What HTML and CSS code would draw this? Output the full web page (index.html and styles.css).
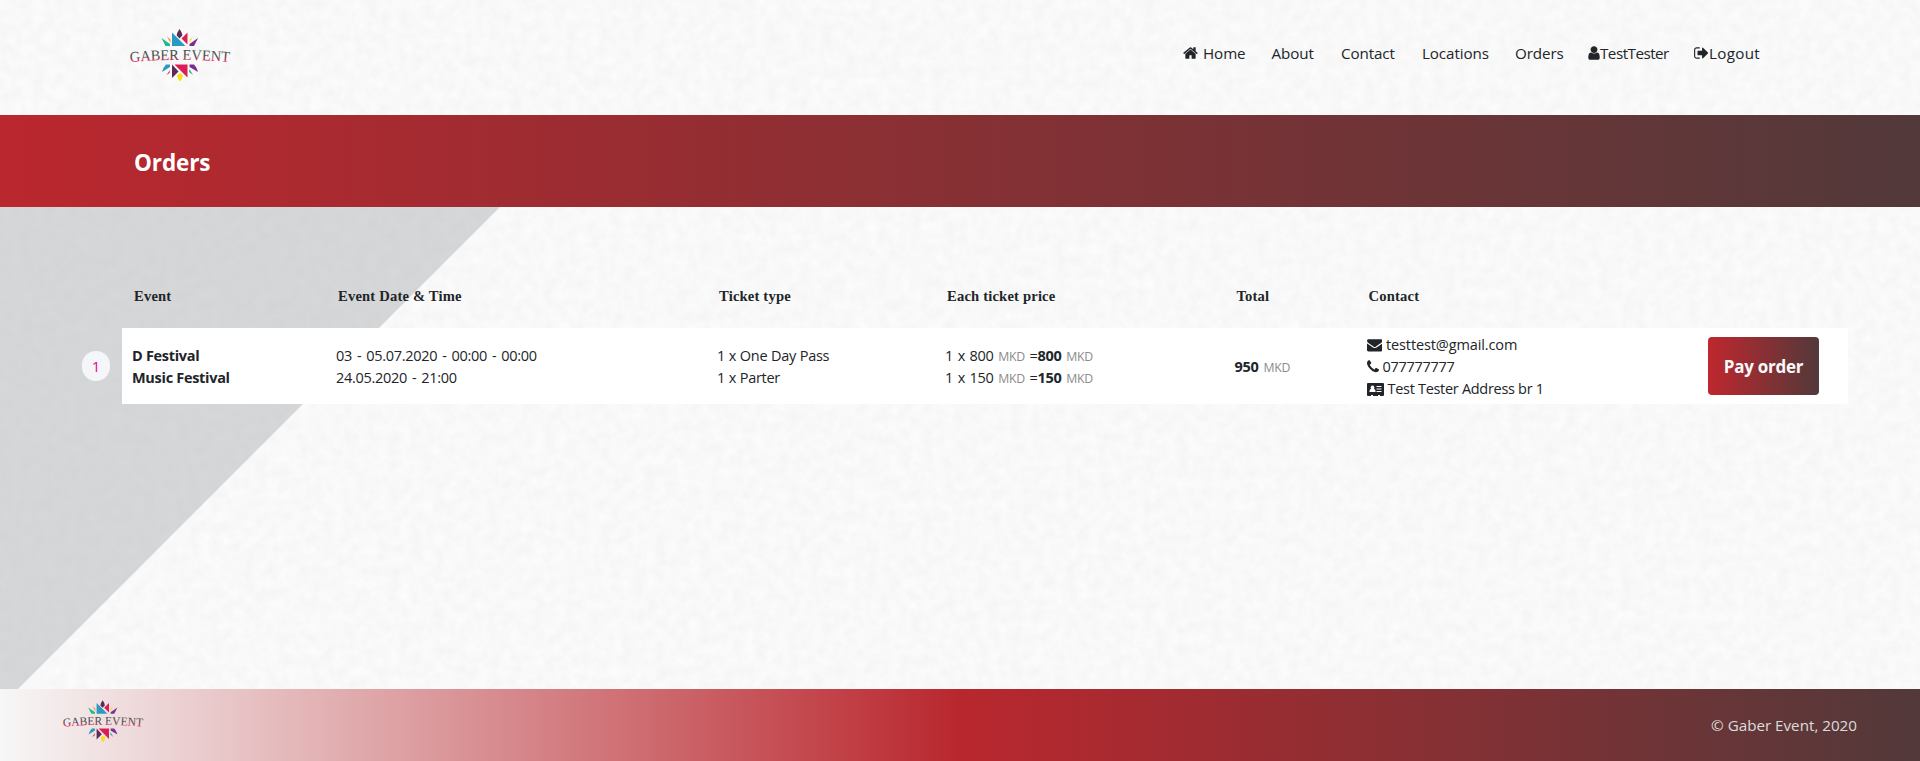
FILE: index.html
```html
<!DOCTYPE html>
<html lang="en">
<head>
<meta charset="utf-8">
<title>Orders - Gaber Event</title>
<link rel="stylesheet" href="styles.css">
</head>
<body>
<svg class="defs" width="0" height="0">
  <defs>
    <linearGradient id="ink" x1="0" y1="34" x2="0" y2="48" gradientUnits="userSpaceOnUse">
      <stop offset=".5" stop-color="#4a4a4c"/><stop offset=".82" stop-color="#d42a55"/>
    </linearGradient>
    <path id="arc" d="M20.300 47.300 Q70 42.300 121.500 47.300"/>
    <symbol id="logo" viewBox="0 0 140 80">
      <path fill="#5b2a56" d="M69.500 14q3 4 2.800 6.500l-2.800 3-2.800-3q0-2.500 2.800-6.500zM62 49.500l6.500 7-6.500 6.500z"/>
      <path fill="#2a9ac0" d="M62 17.500L75.500 31H62zM60 49.500v2.500l-8 5q1.500-5 4-7.500z"/>
      <path fill="#dc1e57" d="M77.500 17.500v12l-6-6zM64.500 49.500h13V62.500z"/>
      <path fill="#1dbb8c" d="M51.500 23l8.500 6v2h-4.500zM79.500 54l3.500 6-4-3z"/>
      <path fill="#f39233" d="M57 21.500l3.500 3v3.500z"/>
      <path fill="#7b2d90" d="M88 23l-8.500 6v2H84zM79.500 49.500v2.500l8.500 5q-1.500-5-4-7.500z"/>
      <path fill="#f5e21d" d="M83 21.500l-3.500 3v3.500zM70 58l3 2.500q-.5 4-3 6-2.500-2-3-6z"/>
      <path fill="#d82445" d="M60 55l-.5 3-3 2z"/>
      <text class="logo-text" fill="url(#ink)"><textPath href="#arc" textLength="99.500" lengthAdjust="spacingAndGlyphs">GABER EVENT</textPath></text>
    </symbol>
    <filter id="paper" x="0" y="0" width="100%" height="100%" color-interpolation-filters="sRGB">
      <feTurbulence type="fractalNoise" baseFrequency=".09" numOctaves="3" seed="4"/>
      <feColorMatrix values=".04 0 0 0 .954  .04 0 0 0 .954  .04 0 0 0 .954  0 0 0 0 1"/>
    </filter>
  </defs>
</svg>
<svg class="paper"><rect width="100%" height="100%" filter="url(#paper)"/></svg>

<header class="header">
  <svg class="brand"><use href="#logo"/></svg>
  <nav class="nav">
    <a><svg class="fa-home" viewBox="64 0 1664 1792"><path d="M1472 992v480q0 26-19 45t-45 19h-384v-384h-256v384h-384q-26 0-45-19t-19-45v-480q0-1 .5-3t.5-3l575-474 575 474q1 2 1 6zm223-69l-62 74q-8 9-21 11h-3q-13 0-21-7l-692-577-692 577q-12 8-24 7-13-2-21-11l-62-74q-8-10-7-23.500t11-21.500l719-599q32-26 76-26t76 26l244 204v-195q0-14 9-23t23-9h192q14 0 23 9t9 23v408l219 182q10 8 11 21.500t-7 23.500z"/></svg><span class="home">Home</span></a>
    <a>About</a><a>Contact</a><a>Locations</a><a>Orders</a>
    <a class="user"><svg class="fa-user" viewBox="256 0 1280 1792"><path d="M1536 1399q0 109-62.500 187t-150.500 78h-854q-88 0-150.500-78t-62.500-187q0-85 8.500-160.500t31.500-152 58.500-131 94-89 134.500-34.500q131 128 313 128t313-128q76 0 134.500 34.500t94 89 58.500 131 31.500 152 8.500 160.500zm-256-887q0 159-112.500 271.500t-271.500 112.500-271.500-112.500-112.500-271.500 112.500-271.500 271.500-112.500 271.500 112.500 112.500 271.500z"/></svg>TestTester</a>
    <a class="logout"><svg class="fa-out" viewBox="64 0 1664 1792"><path d="M704 1440q0 4 1 20t.5 26.500-3 23.500-10 19.500-20.500 6.500h-320q-119 0-203.500-84.500t-84.500-203.500v-704q0-119 84.500-203.500t203.500-84.500h320q13 0 22.500 9.500t9.500 22.500q0 4 1 20t.5 26.500-3 23.500-10 19.500-20.500 6.500h-320q-66 0-113 47t-47 113v704q0 66 47 113t113 47h312l11.500 1 11.500 3 8 5.500 7 9 2 13.500zm928-544q0 26-19 45l-544 544q-19 19-45 19t-45-19-19-45v-288h-448q-26 0-45-19t-19-45v-384q0-26 19-45t45-19h448v-288q0-26 19-45t45-19 45 19l544 544q19 19 19 45z"/></svg>Logout</a>
  </nav>
</header>

<div class="title-bar"><h1>Orders</h1></div>

<main class="main">
  <div class="row head">
    <span>Event</span><span>Event Date &amp; Time</span><span>Ticket type</span><span>Each ticket price</span><span>Total</span><span>Contact</span>
  </div>
  <div class="order">
    <div class="number">1</div>
    <div class="row body">
      <div class="bold">D Festival<br>Music Festival</div>
      <div class="dates">03 - 05.07.2020 - 00:00 - 00:00<br>24.05.2020 - 21:00</div>
      <div class="tickets">1 x One Day Pass<br>1 x Parter</div>
      <div class="prices">1 x 800 <small>MKD</small> =<b>800</b> <small>MKD</small><br>1 x 150 <small>MKD</small> =<b>150</b> <small>MKD</small></div>
      <div class="total"><b>950</b> <small>MKD</small></div>
      <div class="contact">
        <p><svg class="fa-mail" viewBox="0 0 1792 1792"><path d="M1792 710v794q0 66-47 113t-113 47h-1472q-66 0-113-47t-47-113v-794q44 49 101 87 362 246 497 345 57 42 92.500 65.500t94.500 48 110 24.500h2q51 0 110-24.500t94.500-48 92.500-65.500q170-123 498-345 57-39 100-87zm0-294q0 79-49 151t-122 123q-376 261-468 325-10 7-42.500 31t-54 38.500-52 32.500-57.500 27-50 9h-2q-23 0-50-9t-57.500-27-52-32.500-54-38.500-42.500-31q-91-64-262-182.500t-205-142.500q-62-42-117-115.500t-55-136.500q0-78 41.500-130t118.500-52h1472q65 0 112.500 47t47.500 113z"/></svg><span class="mail">testtest@gmail.com</span></p>
        <p><svg class="fa-phone" viewBox="192 0 1408 1792"><path d="M1600 1240q0 27-10 70.500t-21 68.500q-21 50-122 106-94 51-186 51-27 0-53-3.500t-57.500-12.500-47-14.500-55.500-20.500-49-18q-98-35-175-83-127-79-264-216t-216-264q-48-77-83-175-3-9-18-49t-20.500-55.500-14.500-47-12.500-57.500-3.500-53q0-92 51-186 56-101 106-122 25-11 68.500-21t70.500-10q14 0 21 3 18 6 53 76 11 19 30 54t35 63.500 31 53.500q3 4 17.500 25t21.500 35.500 7 28.500q0 20-28.500 50t-62 55-62 53-28.500 46q0 9 5 22.500t8.500 20.500 14 24 11.500 19q76 137 174 235t235 174q2 1 19 11.500t24 14 20.500 8.500 22.500 5q18 0 46-28.500t53-62 55-62 50-28.500q14 0 28.500 7t35.500 21.500 25 17.500q25 15 53.500 31t63.500 35 54 30q70 35 76 53 3 7 3 21z"/></svg><span class="phone">077777777</span></p>
        <p><svg class="fa-card" viewBox="0 0 17 13"><path fill-rule="evenodd" d="M1 0h15q1 0 1 1v11q0 1-1 1h-3v-1h-2v1H6v-1H4v1H1q-1 0-1-1V1q0-1 1-1zM5.500 2.500a2 2 0 0 0-1.500 3.200q-1.600.5-1.600 3.300h6.200q0-2.800-1.600-3.300a2 2 0 0 0-1.500-3.200zM9.500 3v1h5V3zm0 2.500v1h5v-1zm0 2.500v1h5V8z"/></svg><span class="address">Test Tester Address br 1</span></p>
      </div>
      <button class="pay">Pay order</button>
    </div>
  </div>
</main>

<footer class="footer">
  <svg class="foot-brand"><use href="#logo"/></svg>
  <span>© Gaber Event, 2020</span>
</footer>
</body>
</html>
```

FILE: styles.css
```css
* { box-sizing: border-box; }
body {
  margin: 0;
  height: 761px;
  overflow: hidden;
  display: flex;
  flex-direction: column;
  background: #f9f9f9;
  color: #212529;
  font-family: "Open Sans", "Noto Sans", sans-serif;
}
svg { fill: currentColor; flex: none; display: block; }
.defs { position: absolute; }
.paper { position: absolute; inset: 0; width: 100%; height: 100%; z-index: -1; }
.logo-text { font: 15px "Liberation Serif", serif; }

.header { height: 115px; flex: none; display: flex; justify-content: space-between; padding: 15px 160px 0 110px; }
.brand { width: 140px; height: 80px; }
.nav {
  display: grid;
  grid-template-columns: 88.500px 69.500px 81px 93px 73px 106px 66px;
  height: 26px;
  margin-top: 25px;
  font-size: 15.200px;
  line-height: 26px;
  letter-spacing: -0.1px;
}
.nav a { display: flex; align-items: center; white-space: nowrap; }
.nav .user { letter-spacing: -0.5px; }
.nav .logout { letter-spacing: 0.3px; }
.home { margin-left: 5px; }
.fa-home, .fa-out { width: 15px; height: 16px; }
.fa-user { width: 12px; height: 16px; }

.title-bar { height: 92px; flex: none; display: flex; align-items: center; padding-left: 134px; background: linear-gradient(90deg, #bb272e, #52393a); }
.title-bar h1 { margin: 0; padding-top: 3px; color: #fff; font-size: 22.500px; line-height: 30px; letter-spacing: -0.1px; }

.main { height: 482px; flex: none; padding: 75px 72px 0 82px; background: linear-gradient(135deg, rgba(177, 179, 183, .5) 353.200px, transparent 353.800px); }
.row { display: grid; grid-template-columns: 204px 381px 228px 289.500px 132px 341.500px 111px; }
.head { padding-left: 52px; height: 46px; font: bold 14.600px/28px "Liberation Serif", serif; letter-spacing: 0.180px; white-space: nowrap; }
.order { display: flex; align-items: center; }
.number { width: 28px; height: 30px; margin-right: 12px; border-radius: 14px; background: #f5f6f9; color: #e5097f; text-align: center; font-size: 15px; line-height: 30px; }
.body { flex: 1; height: 76px; padding-left: 10px; background: #fff; align-items: center; font-size: 14.500px; line-height: 22px; white-space: nowrap; letter-spacing: -0.3px; }
.bold, .dates, .tickets, .prices, .total { padding-top: 2px; }
.bold, b { font-weight: 700; }
.dates, .prices, .total { word-spacing: 1.500px; }
.tickets { word-spacing: 0.300px; }
small { font-size: 12.300px; line-height: 1; color: #8b8b8b; }
.prices { word-spacing: 1.200px; }
.contact p { margin: 0; display: flex; align-items: center; height: 22px; }
.contact span { padding-top: 2px; }
.contact svg { position: relative; top: 1px; }
.mail { letter-spacing: -0.120px; }
.fa-mail { width: 15.500px; height: 15.500px; margin-right: 4px; }
.fa-phone { width: 12px; height: 15.500px; margin-right: 4px; }
.fa-card { width: 17px; height: 13px; margin-right: 4px; }
.pay { width: 111px; height: 58px; padding: 2px 0 0; border: 0; border-radius: 4px; background: linear-gradient(90deg, #bf272e, #52393a); color: #f8f9fa; font: 700 17px/24px "Open Sans", sans-serif; letter-spacing: -0.250px; }

.footer { height: 72px; flex: none; display: flex; justify-content: space-between; align-items: flex-start; padding: 0 63px 0 47px; background: linear-gradient(90deg, #f7f7f7, #b9272e 50%, #52393a); color: #dcdcdc; font-size: 15.200px; }
.foot-brand { width: 112px; height: 64px; }
.footer span { line-height: 72px; }
```
